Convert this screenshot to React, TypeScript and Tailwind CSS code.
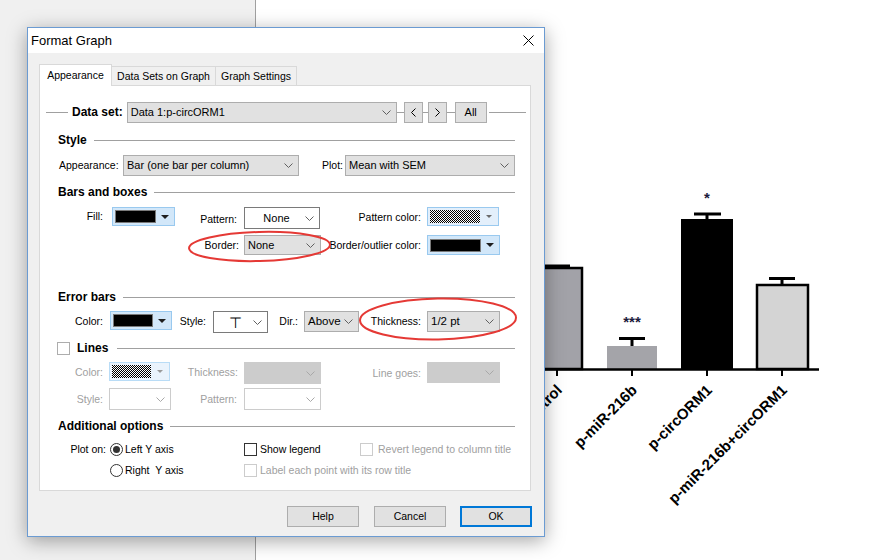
import React from "react";

type ComboVariant = "gray" | "white" | "disabled" | "disabledWhite";

const Chevron = ({ color = "#606060" }: { color?: string }) => (
  <svg width="9" height="5" viewBox="0 0 9 5" className="shrink-0">
    <path d="M0.5 0.5 L4.5 4.5 L8.5 0.5" fill="none" stroke={color} strokeWidth="1" />
  </svg>
);

function Combo({
  cls,
  variant = "gray",
  text = "",
  center = false,
}: {
  cls: string;
  variant?: ComboVariant;
  text?: React.ReactNode;
  center?: boolean;
}) {
  const v = {
    gray: "bg-[#e1e1e1] border-[#adadad]",
    white: "bg-white border-[#7a7a7a]",
    disabled: "bg-[#cccccc] border-[#cccccc]",
    disabledWhite: "bg-white border-[#cccccc]",
  }[variant];
  const chev = variant === "disabled" || variant === "disabledWhite" ? "#a8a8a8" : "#606060";
  return (
    <div className={`${cls} ${v} border flex items-center pr-[5px] shrink-0`}>
      <div className={`flex-1 pl-[3px] text-[10.5px] leading-none whitespace-nowrap overflow-hidden ${center ? "text-center" : "text-left"}`}>
        {text}
      </div>
      <Chevron color={chev} />
    </div>
  );
}

function Dither({ id }: { id: string }) {
  return (
    <svg className="w-full h-full block" preserveAspectRatio="none">
      <defs>
        <pattern id={id} width="2" height="2" patternUnits="userSpaceOnUse">
          <rect width="2" height="2" fill="#ffffff" />
          <rect width="1" height="1" fill="#000000" />
          <rect x="1" y="1" width="1" height="1" fill="#000000" />
        </pattern>
      </defs>
      <rect width="100%" height="100%" fill={`url(#${id})`} />
    </svg>
  );
}

function ColorCombo({ cls, kind, id }: { cls: string; kind: "black" | "dither" | "ditherDisabled"; id: string }) {
  const box =
    kind === "black"
      ? "border-[#99c9ef] bg-[#d2e7f9]"
      : kind === "dither"
      ? "border-[#99c9ef] bg-[#e3effb]"
      : "border-[#b9dcf6] bg-[#eaf3fc]";
  return (
    <div className={`${cls} ${box} border flex items-center pl-[2px] shrink-0`}>
      {kind === "black" ? (
        <div className="flex-1 h-[13px] bg-black border border-[#7a7a7a]" />
      ) : (
        <div className="flex-1 h-[13px]">
          <Dither id={id} />
        </div>
      )}
      <div className="w-[18px] flex items-center justify-center">
        {kind === "black" ? (
          <svg width="8" height="4" viewBox="0 0 8 4">
            <path d="M0 0 L8 0 L4 4 Z" fill="#1e1e1e" />
          </svg>
        ) : (
          <svg width="6" height="3" viewBox="0 0 6 3">
            <path d="M0 0 L6 0 L3 3 Z" fill={kind === "dither" ? "#6a6a6a" : "#9a9a9a"} />
          </svg>
        )}
      </div>
    </div>
  );
}

function L({
  cls,
  children,
  dis = false,
  left = false,
}: {
  cls: string;
  children?: React.ReactNode;
  dis?: boolean;
  left?: boolean;
}) {
  return (
    <div
      className={`${cls} shrink-0 flex items-center ${left ? "justify-start" : "justify-end"} text-[10.5px] leading-none whitespace-pre ${
        dis ? "text-[#a0a0a0]" : "text-black"
      }`}
    >
      {children}
    </div>
  );
}

function Heading({ children }: { children: React.ReactNode }) {
  return (
    <div className="flex items-center h-[16px] pl-[18px] pr-[15px] shrink-0">
      <span className="text-[12px] font-bold leading-none">{children}</span>
      <div className="flex-1 h-px bg-[#a0a0a0] ml-[7px]" />
    </div>
  );
}

const Radio = ({ checked = false }: { checked?: boolean }) => (
  <div className="w-[13px] h-[13px] rounded-full border border-[#333333] bg-white flex items-center justify-center shrink-0">
    {checked && <div className="w-[7px] h-[7px] rounded-full bg-[#333333]" />}
  </div>
);

const Check = ({ dis = false, light = false }: { dis?: boolean; light?: boolean }) => (
  <div
    className={`w-[13px] h-[13px] border bg-white shrink-0 ${
      dis ? "border-[#cccccc]" : light ? "border-[#adadad]" : "border-[#333333]"
    }`}
  />
);

const SmallBtn = ({ cls, children }: { cls: string; children: React.ReactNode }) => (
  <div className={`${cls} h-[21px] bg-[#e1e1e1] border border-[#adadad] flex items-center justify-center text-[11px] leading-none shrink-0`}>
    {children}
  </div>
);

const Btn = ({ children, ok = false }: { children: React.ReactNode; ok?: boolean }) => (
  <div
    className={`w-[72px] h-[21px] bg-[#e1e1e1] flex items-center justify-center text-[10.5px] leading-none shrink-0 ${
      ok ? "border-2 border-[#0078d7]" : "border border-[#adadad]"
    }`}
  >
    {children}
  </div>
);

function Chart() {
  const lab = {
    fontFamily: "'Liberation Sans', Arial, sans-serif",
    fontWeight: 700,
    fontSize: 15,
  } as const;
  const labels: [number, string][] = [
    [557, "Control"],
    [632, "p-miR-216b"],
    [707, "p-circORM1"],
    [782, "p-miR-216b+circORM1"],
  ];
  return (
    <svg width="624" height="560" viewBox="256 0 624 560" className="block">
      <rect x="531" y="268" width="51" height="101" fill="#a2a2a8" stroke="#000" strokeWidth="2.5" />
      <line x1="543" y1="266" x2="570" y2="266" stroke="#000" strokeWidth="3" />
      <rect x="607" y="346" width="50" height="23" fill="#a4a4a9" />
      <line x1="632" y1="346" x2="632" y2="339" stroke="#000" strokeWidth="3" />
      <line x1="619" y1="338.5" x2="645" y2="338.5" stroke="#000" strokeWidth="3" />
      <text x="632" y="327" textAnchor="middle" fill="#1c1c3c" style={{ ...lab, fontSize: 15 }}>
        ***
      </text>
      <rect x="681" y="219" width="52" height="150" fill="#000" />
      <line x1="707" y1="219" x2="707" y2="214" stroke="#000" strokeWidth="3" />
      <line x1="694" y1="214" x2="721" y2="214" stroke="#000" strokeWidth="3" />
      <text x="707" y="203" textAnchor="middle" fill="#1c1c3c" style={{ ...lab, fontSize: 15 }}>
        *
      </text>
      <rect x="757" y="285" width="51" height="84" fill="#d4d4d4" stroke="#000" strokeWidth="2.5" />
      <line x1="782" y1="285" x2="782" y2="279" stroke="#000" strokeWidth="3" />
      <line x1="769" y1="278.5" x2="795" y2="278.5" stroke="#000" strokeWidth="3" />
      <line x1="530" y1="369.5" x2="819" y2="369.5" stroke="#000" strokeWidth="2.5" />
      {labels.map(([x]) => (
        <line key={x} x1={x} y1="369" x2={x} y2="376" stroke="#000" strokeWidth="2" />
      ))}
      {labels.map(([x, t]) => (
        <text
          key={t}
          x={x + 6}
          y={391}
          textAnchor="end"
          transform={`rotate(-45 ${x + 6} 391)`}
          fill="#000"
          style={lab}
        >
          {t}
        </text>
      ))}
    </svg>
  );
}

export default function App() {
  return (
    <div className="relative w-[880px] h-[560px] overflow-hidden flex font-['Liberation_Sans',Arial,sans-serif] text-black">
      <div className="w-[256px] h-full bg-[#f0f0f0] border-r border-[#a0a0a0] shrink-0" />
      <div className="flex-1 h-full bg-white">
        <Chart />
      </div>

      <div className="absolute left-[27px] top-[27px] w-[518px] h-[510px] border border-[#6b9bd2] bg-[#f0f0f0] shadow-[0_4px_18px_rgba(0,0,0,0.35)] flex flex-col">
        <div className="h-[25px] bg-white flex items-center pl-[3px] pr-[10px] shrink-0">
          <span className="text-[13px] leading-none flex-1">Format Graph</span>
          <svg width="11" height="11" viewBox="0 0 11 11">
            <path d="M0.5 0.5 L10.5 10.5 M10.5 0.5 L0.5 10.5" stroke="#000" strokeWidth="1" />
          </svg>
        </div>

        <div className="pl-[11px] pt-[11px] flex flex-col">
          <div className="flex items-end h-[21px] relative z-10">
            <div className="w-[73px] h-[22px] -mb-px bg-white border border-b-0 border-[#d9d9d9] flex items-center justify-center text-[10.5px] leading-none">
              Appearance
            </div>
            <div className="w-[104px] h-[19px] bg-[#f0f0f0] border-t border-r border-[#d9d9d9] flex items-center justify-center text-[10.5px] leading-none">
              Data Sets on Graph
            </div>
            <div className="w-[81px] h-[19px] bg-[#f0f0f0] border-t border-r border-[#d9d9d9] flex items-center justify-center text-[10.5px] leading-none">
              Graph Settings
            </div>
          </div>

          <div className="w-[492px] h-[406px] bg-white border border-[#d9d9d9] flex flex-col">
            <div className="mt-[15px] h-[22px] flex items-center shrink-0">
              <div className="ml-[6px] w-[22px] h-px bg-[#a0a0a0]" />
              <span className="ml-[4px] text-[12px] font-bold leading-none">Data set:</span>
              <Combo cls="ml-[4px] w-[270px] h-[21px]" text={<span className="text-[11px]">Data 1:p-circORM1</span>} />
              <div className="w-[7px] h-px bg-[#a0a0a0]" />
              <SmallBtn cls="w-[19px]">
                <svg width="5" height="9" viewBox="0 0 5 9">
                  <path d="M4.5 0.5 L0.5 4.5 L4.5 8.5" fill="none" stroke="#000" strokeWidth="1" />
                </svg>
              </SmallBtn>
              <div className="w-[5px] h-px bg-[#a0a0a0]" />
              <SmallBtn cls="w-[19px]">
                <svg width="5" height="9" viewBox="0 0 5 9">
                  <path d="M0.5 0.5 L4.5 4.5 L0.5 8.5" fill="none" stroke="#000" strokeWidth="1" />
                </svg>
              </SmallBtn>
              <div className="w-[8px] h-px bg-[#a0a0a0]" />
              <SmallBtn cls="w-[32px]">All</SmallBtn>
              <div className="ml-[2px] w-[37px] h-px bg-[#a0a0a0]" />
            </div>

            <div className="mt-[9px]">
              <Heading>Style</Heading>
            </div>

            <div className="mt-[7px] h-[21px] flex items-center shrink-0 pl-[19px]">
              <L cls="w-[64px]" left>
                Appearance:
              </L>
              <Combo cls="w-[176px] h-[21px]" text={<span className="text-[11px]">Bar (one bar per column)</span>} />
              <L cls="w-[44px]">Plot:</L>
              <Combo cls="ml-[2px] w-[170px] h-[21px]" text={<span className="text-[11px]">Mean with SEM</span>} />
            </div>

            <div className="mt-[8px]">
              <Heading>Bars and boxes</Heading>
            </div>

            <div className="mt-[7px] h-[22px] flex items-start shrink-0">
              <L cls="w-[63px] h-[19px]">Fill:</L>
              <ColorCombo cls="ml-[9px] w-[63px] h-[19px]" kind="black" id="d1" />
              <L cls="w-[62px] h-[24px]">Pattern:</L>
              <Combo cls="ml-[7px] w-[76px] h-[22px]" variant="white" text={<span className="text-[11px]">None</span>} center />
              <L cls="w-[101px] h-[21px]">Pattern color:</L>
              <ColorCombo cls="ml-[6px] w-[72px] h-[19px]" kind="dither" id="d2" />
            </div>

            <div className="mt-[6px] h-[20px] flex items-center shrink-0">
              <L cls="w-[199px]">Border:</L>
              <Combo cls="ml-[5px] w-[77px] h-[20px]" text={<span className="text-[11px]">None</span>} />
              <L cls="w-[100px]">Border/outlier color:</L>
              <ColorCombo cls="ml-[6px] w-[73px] h-[20px]" kind="black" id="d3" />
            </div>

            <div className="mt-[34px]">
              <Heading>Error bars</Heading>
            </div>

            <div className="mt-[6px] h-[22px] flex items-start shrink-0">
              <L cls="w-[63px] h-[20px]">Color:</L>
              <ColorCombo cls="ml-[7px] w-[62px] h-[19px]" kind="black" id="d4" />
              <L cls="w-[34px] h-[21px]">Style:</L>
              <Combo cls="ml-[7px] w-[55px] h-[22px]" variant="white" text={<span className="text-[15px] font-light">⊤</span>} center />
              <L cls="w-[30px] h-[21px]">Dir.:</L>
              <Combo cls="ml-[6px] w-[55px] h-[21px]" text={<span className="text-[11.5px]">Above</span>} />
              <L cls="w-[62px] h-[21px]">Thickness:</L>
              <Combo cls="ml-[6px] w-[73px] h-[21px]" text={<span className="text-[11.5px]">1/2 pt</span>} />
            </div>

            <div className="mt-[7px] h-[16px] flex items-center pl-[17px] pr-[15px] shrink-0">
              <Check light />
              <span className="ml-[7px] text-[12px] font-bold leading-none">Lines</span>
              <div className="flex-1 h-px bg-[#a0a0a0] ml-[9px]" />
            </div>

            <div className="mt-[6px] h-[22px] flex items-start shrink-0">
              <L cls="w-[63px] h-[20px]" dis>
                Color:
              </L>
              <ColorCombo cls="ml-[6px] w-[61px] h-[19px]" kind="ditherDisabled" id="d5" />
              <L cls="w-[68px] h-[21px]" dis>
                Thickness:
              </L>
              <Combo cls="ml-[6px] w-[77px] h-[22px]" variant="disabled" />
              <L cls="w-[100px] h-[22px]" dis>
                Line goes:
              </L>
              <Combo cls="ml-[6px] w-[73px] h-[21px]" variant="disabled" />
            </div>

            <div className="mt-[4px] h-[22px] flex items-center shrink-0">
              <L cls="w-[63px]" dis>
                Style:
              </L>
              <Combo cls="ml-[6px] w-[62px] h-[22px]" variant="disabledWhite" />
              <L cls="w-[66px]" dis>
                Pattern:
              </L>
              <Combo cls="ml-[7px] w-[77px] h-[22px]" variant="disabledWhite" />
            </div>

            <div className="mt-[8px]">
              <Heading>Additional options</Heading>
            </div>

            <div className="mt-[7px] h-[16px] flex items-center shrink-0">
              <L cls="w-[66px]">Plot on:</L>
              <div className="w-[138px] flex items-center pl-[4px]">
                <Radio checked />
                <span className="ml-[2px] text-[10.5px] leading-none">Left Y axis</span>
              </div>
              <div className="w-[116px] flex items-center">
                <Check />
                <span className="ml-[3px] text-[10.5px] leading-none">Show legend</span>
              </div>
              <div className="flex items-center">
                <Check dis />
                <span className="ml-[5px] text-[10.5px] leading-none text-[#a0a0a0]">Revert legend to column title</span>
              </div>
            </div>

            <div className="mt-[5px] h-[16px] flex items-center shrink-0">
              <div className="w-[66px]" />
              <div className="w-[138px] flex items-center pl-[4px]">
                <Radio />
                <span className="ml-[2px] text-[10.5px] leading-none whitespace-pre">Right  Y axis</span>
              </div>
              <div className="flex items-center">
                <Check dis />
                <span className="ml-[3px] text-[10.5px] leading-none text-[#a0a0a0]">Label each point with its row title</span>
              </div>
            </div>
          </div>

          <div className="mt-[15px] w-[493px] flex justify-end">
            <Btn>Help</Btn>
            <div className="w-[15px]" />
            <Btn>Cancel</Btn>
            <div className="w-[14px]" />
            <Btn ok>OK</Btn>
          </div>
        </div>
      </div>

      <svg className="absolute left-0 top-0 pointer-events-none" width="880" height="560">
        <ellipse cx="259.5" cy="246.5" rx="70.5" ry="14.5" fill="none" stroke="#e53935" strokeWidth="2" transform="rotate(-1.5 259.5 246.5)" />
        <ellipse cx="438" cy="319" rx="78" ry="20.5" fill="none" stroke="#e53935" strokeWidth="2" transform="rotate(-1 438 319)" />
      </svg>
    </div>
  );
}
